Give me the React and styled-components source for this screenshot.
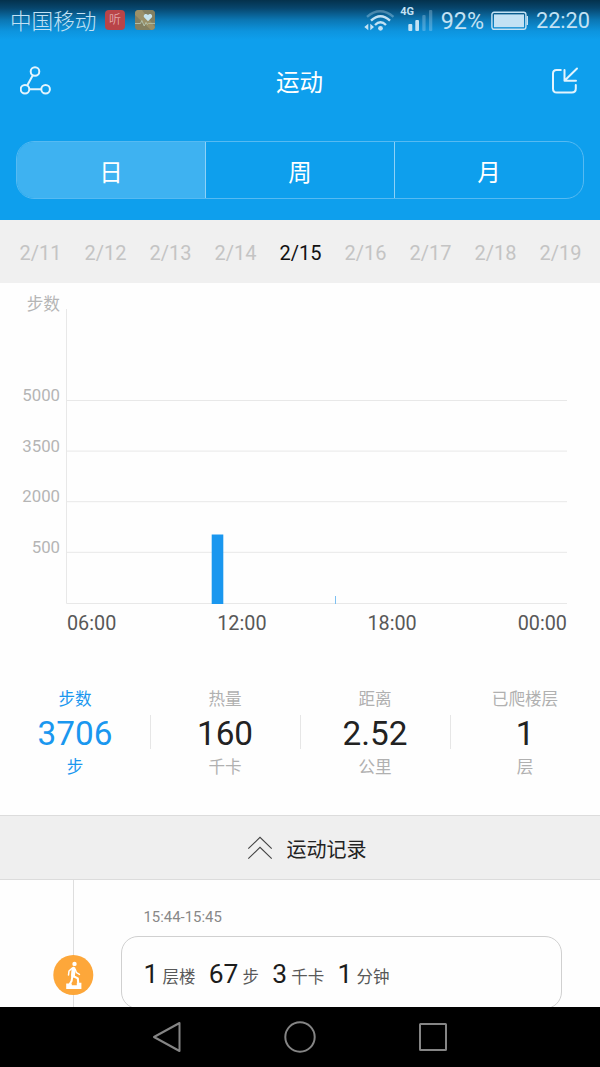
import React from "react";
import styled, { createGlobalStyle } from "styled-components";

const Global = createGlobalStyle`
  * { box-sizing: border-box; }
  body { margin: 0; background: #fff; }
`;

const Screen = styled.div`
  width: 600px;
  height: 1067px;
  display: flex;
  flex-direction: column;
  overflow: hidden;
  background: #fefefe;
  font-family: Roboto, "Noto Sans CJK SC", sans-serif;
  font-weight: 400;
  white-space: nowrap;
`;

const Header = styled.header`
  height: 220px;
  flex: none;
  display: flex;
  flex-direction: column;
  color: #fff;
  background: linear-gradient(#04314c 0, #07456c 8px, #0b77b4 20px, #0d94de 31px, #0e9fed 40px);
`;

const StatusBar = styled.div`
  height: 42px;
  padding: 0 10px 0 10px;
  display: flex;
  align-items: center;
  color: #c3e2f4;
`;

const Carrier = styled.span`
  font-size: 21.6px;
  font-weight: 300;
  line-height: 42px;
  padding-top: 2px;
  width: 86px;
  margin-right: 9px;
`;

const AppBadge = styled.span`
  width: 20px;
  height: 20px;
  margin: -2px 10px 0 0;
  border-radius: 4px;
  display: flex;
  align-items: center;
  justify-content: center;
  overflow: hidden;
  font-size: 12px;
  font-weight: 300;
  line-height: 20px;
  color: #efc9ca;
  background: ${(p) => p.$fill};
`;

const StatusRight = styled.div`
  margin-left: auto;
  display: flex;
  align-items: center;
`;

const StatusText = styled.span`
  font-size: ${(p) => p.$size}px;
  line-height: 42px;
`;

const Network = styled.div`
  width: 78px;
  height: 42px;
  display: flex;
`;

const Battery = styled.svg`
  margin: 0 8px 0 7px;
`;

const TitleBar = styled.div`
  height: 78px;
  padding: 0 21px 0 20px;
  display: grid;
  grid-template-columns: 1fr auto 1fr;
  align-items: center;
`;

const TitleAction = styled.span`
  display: flex;
  justify-content: ${(p) => (p.$end ? "flex-end" : "flex-start")};
  padding-bottom: 1px;
`;

const Title = styled.h1`
  margin: 0;
  padding-top: 3px;
  font-size: 23.5px;
  font-weight: 400;
  line-height: 34px;
`;

const Tabs = styled.div`
  height: 58px;
  margin: 21px 16px 0;
  display: flex;
  border: 1px solid #56baf2;
  border-radius: 18px;
  overflow: hidden;
`;

const Tab = styled.div`
  flex: 1;
  display: flex;
  align-items: center;
  justify-content: center;
  padding-top: 2px;
  font-size: 23.5px;
  background: ${(p) => (p.$active ? "#3eb2f1" : "transparent")};
  & + & { border-left: 1px solid #8dd1f7; }
`;

const Dates = styled.div`
  height: 63px;
  flex: none;
  padding: 2px 7px 0 8px;
  display: flex;
  align-items: center;
  background: #f0f0f0;
`;

const DateItem = styled.span`
  flex: 1;
  text-align: center;
  font-size: 20px;
  color: ${(p) => (p.$active ? "#111" : "#c4c4c4")};
`;

const Chart = styled.section`
  height: 360px;
  flex: none;
  display: flex;
`;

const YAxis = styled.div`
  width: 60px;
  margin-right: 6px;
  display: flex;
  flex-direction: column;
  text-align: right;
  color: #b5b5b5;
`;

const AxisName = styled.div`
  height: 87px;
  padding-top: 2px;
  font-size: 16.7px;
  line-height: 40px;
`;

const YLabel = styled.div`
  height: 50.6px;
  font-size: 16.8px;
  line-height: 51px;
`;

const PlotColumn = styled.div`
  width: 501px;
  padding-top: 26px;
`;

const Plot = styled.svg`
  display: block;
`;

const XAxis = styled.div`
  display: flex;
  justify-content: space-between;
  padding-left: 1px;
  margin-top: 8px;
  font-size: 19.8px;
  line-height: 24px;
  color: #585858;
`;

const Stats = styled.section`
  height: 172px;
  flex: none;
  padding-top: 45px;
  display: flex;
`;

const Stat = styled.div`
  flex: 1;
  height: 96px;
  display: flex;
  flex-direction: column;
  align-items: center;
  color: ${(p) => (p.$active ? "#1a97ef" : "#b0b0b0")};
  background: ${(p) => (p.$divider ? "linear-gradient(#e6e6e6, #e6e6e6) 0 27px / 1px 34px no-repeat" : "none")};
`;

const StatCaption = styled.span`
  font-size: 16.6px;
  line-height: 24px;
`;

const StatValue = styled.span`
  font-size: 33.3px;
  line-height: 44px;
  color: ${(p) => (p.$active ? "#1a97ef" : "#222")};
`;

const RecordsBar = styled.div`
  height: 65px;
  flex: none;
  display: flex;
  align-items: center;
  padding-left: 247px;
  gap: 13.5px;
  font-size: 20px;
  color: #222;
  background: #efefef;
  border-top: 1px solid #dcdcdc;
  border-bottom: 1px solid #dcdcdc;
`;

const RecordsTitle = styled.span`
  padding-top: 1px;
`;

const Records = styled.section`
  height: 127px;
  flex: none;
  display: flex;
  overflow: hidden;
`;

const Timeline = styled.div`
  width: 121px;
  flex: none;
  padding: 75px 0 0 53px;
  background: linear-gradient(#dedede, #dedede) 73px 0 / 1px 100% no-repeat;
`;

const Entry = styled.div`
  width: 441px;
  flex: none;
`;

const EntryTime = styled.div`
  height: 56px;
  padding: 28px 0 0 22.5px;
  font-size: 14.9px;
  line-height: 19px;
  color: #888;
`;

const EntryCard = styled.div`
  height: 73px;
  padding: 21px 0 0 21.5px;
  display: flex;
  align-items: baseline;
  border: 1px solid #d0d0d0;
  border-radius: 17px;
`;

const Amount = styled.span`
  margin-right: 4.2px;
  font-size: 26.4px;
  line-height: 32px;
  color: #1c1c1c;
`;

const Unit = styled.span`
  margin-right: 13.2px;
  font-size: 16.5px;
  line-height: 24px;
  color: #585858;
`;

const NavBar = styled.nav`
  height: 60px;
  flex: none;
  display: flex;
  align-items: center;
  justify-content: center;
  gap: 93px;
  background: #000;
`;

const days = ["2/11", "2/12", "2/13", "2/14", "2/15", "2/16", "2/17", "2/18", "2/19"];
const stats = [
  ["步数", "3706", "步"],
  ["热量", "160", "千卡"],
  ["距离", "2.52", "公里"],
  ["已爬楼层", "1", "层"],
];
const record = [["1", "层楼"], ["67", "步"], ["3", "千卡"], ["1", "分钟"]];

function SignalIcons() {
  return (
    <svg width="78" height="42" viewBox="363 0 78 42" fill="none">
      <g stroke="#c3e2f4" strokeWidth="2.4">
        <path d="M367 16.8Q380 5.5 393.5 16.8" opacity=".35" />
        <path d="M371 20.7Q380.5 12 390 20.7" />
        <path d="M375 25Q380.5 19.6 386 25" />
      </g>
      <circle cx="380.5" cy="28.3" r="2.4" fill="#c3e2f4" />
      <path d="M364.3 27l4-3.3v6.6zM374 27l-3.7-3.3v6.6z" fill="#c3e2f4" />
      <text x="400.3" y="15" fontSize="11" fontWeight="700" fill="#c3e2f4">4G</text>
      <g fill="#c3e2f4">
        <rect x="408.3" y="24" width="4" height="7" rx="1" />
        <rect x="415.3" y="20" width="3.7" height="11" rx="1" />
        <rect x="422.3" y="15" width="3.3" height="16" rx="1" opacity=".3" />
        <rect x="429" y="10" width="3.3" height="21" rx="1" opacity=".3" />
      </g>
    </svg>
  );
}

function HealthIcon() {
  return (
    <svg width="20" height="20" viewBox="0 0 20 20">
      <rect width="20" height="20" fill="#837f61" />
      <path d="M0 0h7l13 17v3h-4L0 5z" fill="#9a9069" />
      <path d="M13 11.3L9.3 7.6C7.4 5.2 10.8 2.3 13 5c2.2-2.7 5.4.2 3.7 2.6z" fill="#c6e4ef" />
      <path d="M0 13.5h5.5l1.3-3 2.4 5.5 1.8-3.6 1.2 2 1.3-1H20" fill="none" stroke="#b5c5b0" strokeWidth=".9" />
    </svg>
  );
}

function RouteIcon() {
  return (
    <svg width="31" height="30" viewBox="0 0 31 30" fill="none" stroke="#e3f4fd" strokeWidth="2">
      <circle cx="15" cy="5.5" r="4.3" />
      <circle cx="5" cy="23.3" r="4.3" />
      <circle cx="25.6" cy="23.3" r="4.3" />
      <path d="M12.8 9.3L7.2 19.5M9.3 23.3h12" />
    </svg>
  );
}

function ImportIcon() {
  return (
    <svg width="28" height="28" viewBox="0 0 28 28" fill="none" stroke="#e3f4fd" strokeWidth="2" strokeLinecap="round" strokeLinejoin="round">
      <path d="M9.8 3H5.5Q2 3 2 6.5v15.2Q2 25.5 5.8 25.5h15Q24.8 25.5 24.8 21.5V18" />
      <path d="M13.5 3v10.7H25M14 13.2L26 1.5" />
    </svg>
  );
}

function StairsIcon() {
  return (
    <svg width="41" height="41" viewBox="0 0 41 41">
      <circle cx="20.3" cy="20" r="20" fill="#fda73a" />
      <circle cx="21.5" cy="8.9" r="2.2" fill="#fff" />
      <path d="M13.2 34v-5.4h5.6v1.6h5v-2.5h4.6V34z" fill="#fff" />
      <g fill="none" stroke="#fff" strokeLinecap="round" strokeLinejoin="round">
        <path d="M20.6 13.7L20 20.5" strokeWidth="4" />
        <path d="M19 13.2l-3 2.8-.5 4" strokeWidth="1.5" />
        <path d="M22.3 14.5l1.2 3.2 3 1.7" strokeWidth="1.4" />
        <path d="M20.5 21.3l4.3 2.1.4 4.4" strokeWidth="2.1" />
        <path d="M19.3 21.5l-.7 4.5-1.7 2.8" strokeWidth="2" />
      </g>
    </svg>
  );
}

export default function App() {
  return (
    <Screen>
      <Global />
      <Header>
        <StatusBar>
          <Carrier>中国移动</Carrier>
          <AppBadge $fill="#b94448">听</AppBadge>
          <AppBadge $fill="#837f61"><HealthIcon /></AppBadge>
          <StatusRight>
            <Network><SignalIcons /></Network>
            <StatusText $size={23.3}>92%</StatusText>
            <Battery width="37" height="20" viewBox="0 0 37 20" fill="none" stroke="#c3e2f4">
              <rect x=".9" y="1.3" width="34" height="17" rx="2.2" strokeWidth="1.4" />
              <rect x="3" y="3.4" width="30" height="12.8" fill="#c3e2f4" stroke="none" />
              <path d="M36.3 5v9" strokeWidth="1.5" />
            </Battery>
            <StatusText $size={21.7}>22:20</StatusText>
          </StatusRight>
        </StatusBar>
        <TitleBar>
          <TitleAction><RouteIcon /></TitleAction>
          <Title>运动</Title>
          <TitleAction $end><ImportIcon /></TitleAction>
        </TitleBar>
        <Tabs>
          <Tab $active>日</Tab>
          <Tab>周</Tab>
          <Tab>月</Tab>
        </Tabs>
      </Header>
      <Dates>
        {days.map((d) => <DateItem key={d} $active={d === "2/15"}>{d}</DateItem>)}
      </Dates>
      <Chart>
        <YAxis>
          <AxisName>步数</AxisName>
          {[5000, 3500, 2000, 500].map((v) => <YLabel key={v}>{v}</YLabel>)}
        </YAxis>
        <PlotColumn>
          <Plot width="501" height="295" viewBox="0 0 501 295">
            <path d="M.5 0v294.5H501M1 91.5h500M1 142.1h500M1 192.7h500M1 243.3h500" fill="none" stroke="#e8e8e8" />
            <rect x="145.7" y="225.5" width="11.6" height="69.5" fill="#1a97ef" />
            <rect x="269" y="287" width="1" height="8" fill="#7cc0f2" />
          </Plot>
          <XAxis>
            <span>06:00</span><span>12:00</span><span>18:00</span><span>00:00</span>
          </XAxis>
        </PlotColumn>
      </Chart>
      <Stats>
        {stats.map(([name, value, unit], i) => (
          <Stat key={name} $active={i === 0} $divider={i > 0}>
            <StatCaption>{name}</StatCaption>
            <StatValue $active={i === 0}>{value}</StatValue>
            <StatCaption>{unit}</StatCaption>
          </Stat>
        ))}
      </Stats>
      <RecordsBar>
        <svg width="26" height="24" viewBox="0 0 26 24" fill="none" stroke="#444" strokeWidth="1.1">
          <path d="M1.3 12.7L13 1.3l11.7 11.4M1.3 22.7L13 11.3l11.7 11.4" />
        </svg>
        <RecordsTitle>运动记录</RecordsTitle>
      </RecordsBar>
      <Records>
        <Timeline><StairsIcon /></Timeline>
        <Entry>
          <EntryTime>15:44-15:45</EntryTime>
          <EntryCard>
            {record.map(([amount, unit]) => (
              <React.Fragment key={unit}>
                <Amount>{amount}</Amount>
                <Unit>{unit}</Unit>
              </React.Fragment>
            ))}
          </EntryCard>
        </Entry>
      </Records>
      <NavBar>
        <svg width="40" height="40" viewBox="0 0 40 40" fill="none" stroke="#858585" strokeWidth="2" strokeLinejoin="round">
          <path d="M7 20L32.5 6v28z" />
        </svg>
        <svg width="40" height="40" viewBox="0 0 40 40" fill="none" stroke="#858585" strokeWidth="2">
          <circle cx="20" cy="20" r="14.7" />
        </svg>
        <svg width="40" height="40" viewBox="0 0 40 40" fill="none" stroke="#858585" strokeWidth="2" strokeLinejoin="round">
          <rect x="7" y="7" width="26" height="26" rx=".5" />
        </svg>
      </NavBar>
    </Screen>
  );
}
